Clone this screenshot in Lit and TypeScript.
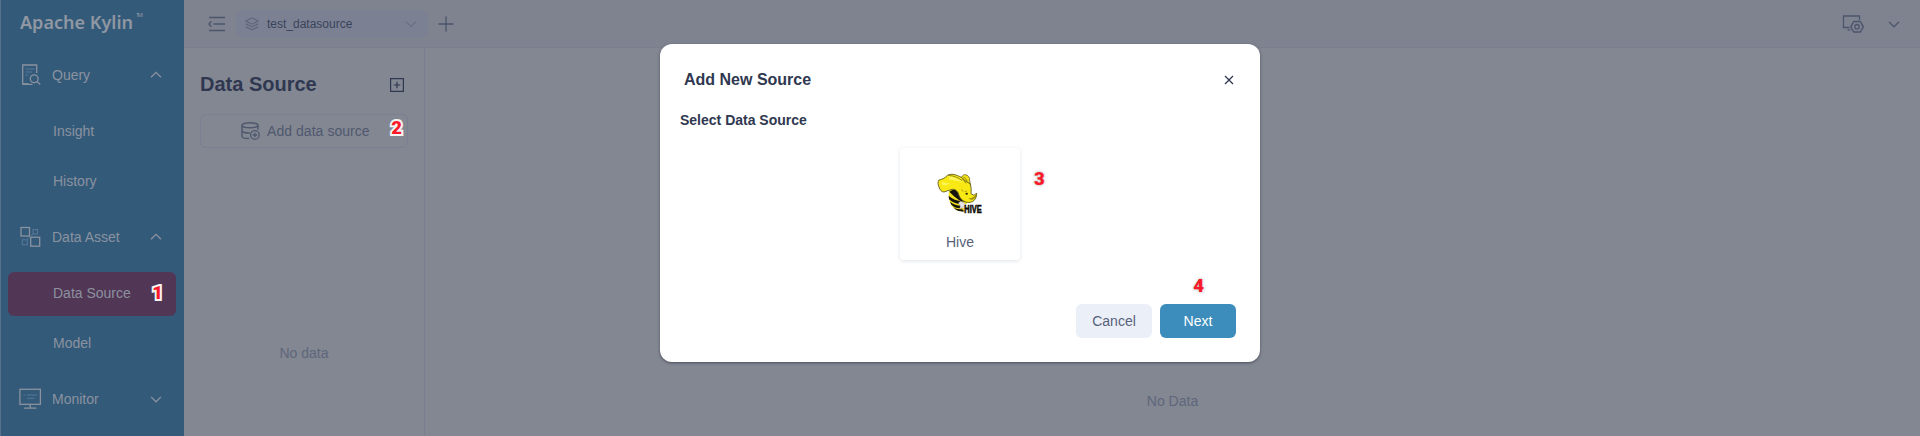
import { LitElement, html, css, svg } from "lit";
import { customElement } from "lit/decorators.js";

const icons = {
  query: svg`<svg class="ico" width="24" height="24" viewBox="0 0 24 24"><path d="M10.500 21H4.700V2H18.700V10" stroke-width="1.300"/><path class="dim" d="M7.500 6h9M7.500 9h6.500M7.500 12h3"/><circle cx="16.200" cy="15.800" r="3.900" stroke-width="1.300"/><path d="M19 18.600l3.300 3M4.700 21.300H14.500" stroke-width="1.300"/></svg>`,
  asset: svg`<svg class="ico" width="24" height="24" viewBox="0 0 24 24"><rect x="3" y="2.500" width="8.500" height="8.500" stroke-width="1.300"/><rect x="12.700" y="12.200" width="9" height="9" stroke-width="1.300"/><rect class="dim" x="15" y="4.500" width="4.500" height="4.500"/><rect class="dim" x="4.300" y="14.800" width="5" height="5"/><path class="dim" d="M12.500 11.500l3-2.700M9 14.600l2.500-2.500"/></svg>`,
  monitor: svg`<svg class="ico" width="24" height="24" viewBox="0 0 24 24"><rect x="1.900" y="2.300" width="20.500" height="15" stroke-width="1.300"/><path d="M12.200 17.300v3.900M6.200 21.200h12.200" stroke-width="1.300"/><path class="dim" d="M5.500 8h1.800M9 8h10M9 11.300h7.500"/></svg>`,
};

const chevron = (up: boolean) =>
  svg`<svg class="ico" width="12" height="12" viewBox="0 0 12 12"><path d=${up ? "M1 8.300L6 3.400l5 4.900" : "M1 3.900L6 8.800l5-4.900"} stroke-width="1.300"/></svg>`;

const hive = svg`<svg width="60" height="60" viewBox="0 0 180 180">
  <path d="M57 78C54 98 59 120 75 132c8 6 17 8 27 6l4-20 28-16-36-36-38 6z" fill="#f4e41b"/>
  <path d="M58 80c12-7 22-8 31-6l10 20 16 10-5 8-20-5C79 99 68 91 58 80zM56 92c11 10 25 15 42 18l4 8C84 119 69 114 57 103zM60 110c10 8 21 12 35 12l3 7c-14 2-25-1-34-10zM70 127c9 6 17 6 27 6l4 5c-12 3-23 0-31-11z" fill="#17150b"/>
  <path d="M93 45c0-10 6-17 13-16 8 1 14 8 13 18l3 13-14 6-16-12z" fill="#f1df16" stroke="#4b481d" stroke-width="2"/>
  <path d="M27 45c7-2 14-4 20-9 6-7 13-9 22-8 10 2 17 5 25 9l12 11 14 8c4 9 4 19 3 30l7 4c4 0 7-2 10-6 0 14-5 22-13 26-9 4-20 3-28-3-9-6-12-15-15-24-5-8-11-11-18-10-9 2-15 6-24 8-7 0-12-6-15-15-4-8-4-15 0-21z" fill="#f8e914" stroke="#55511f" stroke-width="2.500"/>
  <path d="M57 34c17 2 30 10 44 17-15-2-31-7-44-7zM36 50c8 4 16 5 24 5-6 5-16 7-24 4z" fill="#fcf55e"/>
  <path d="M55 31c16 1 29 7 41 15M97 44c5 2 9 6 10 11M100 37c5 1 9 5 11 12" fill="none" stroke="#655f16" stroke-width="2"/>
  <path d="M140 85c0 10-5 17-13 19-5 1-9-1-13-4 10 1 20-3 26-15z" fill="#9b8c10"/>
  <ellipse cx="110" cy="86" rx="4" ry="3" fill="#38320d"/><path d="M104 80l7-2M95 73l4 7" stroke="#8a7e12" stroke-width="2"/>
  <path d="M92 109l10 4 6 8-7 3 3 8-9-4-6 4 2-10-6-8z" fill="#e6e5e8" stroke="#9b99a0" stroke-width="1"/>
  <text x="103" y="145" textLength="52" lengthAdjust="spacingAndGlyphs" font-family="Liberation Sans" font-weight="700" font-size="34" fill="#0d0c04" stroke="#0d0c04" stroke-width="2">HIVE</text>
  <path d="M94 138h10" stroke="#3a370e" stroke-width="3"/>
</svg>`;

@customElement("app-root")
export class AppRoot extends LitElement {
  static styles = css`
    :host { display: block; font-family: "Liberation Sans", Arial, sans-serif; font-size: 14px; line-height: 20px; }
    * { box-sizing: border-box; }
    svg { display: block; flex: none; }
    .ico { fill: none; stroke: currentColor; stroke-width: 1; }
    .dim { stroke: #587899; stroke-width: 1; }
    .page { position: relative; display: flex; width: 1920px; height: 436px; overflow: hidden; background: #838792; }
    .side { width: 184px; background: #345a7a; border-left: 1px solid #57728a; color: #8a929f; }
    .logo { height: 47px; padding: 9px 0 0 19px; }
    .logo text { font-family: "Noto Sans", sans-serif; fill: #8f97a2; }
    .group { display: flex; align-items: center; height: 56px; padding: 0 22px 0 17px; }
    .group span { flex: 1; padding-left: 10px; }
    .sub { display: flex; align-items: center; justify-content: space-between; height: 44px; margin: 6px 8px 0 7px; padding: 0 13px 0 45px; border-radius: 6px; }
    .sub + .group { margin-top: 6px; }
    .active { margin-top: 7px; margin-bottom: -1px; padding-bottom: 2px; background: #523655; }
    .right { flex: 1; display: flex; flex-direction: column; }
    .top { display: flex; align-items: center; height: 48px; border-bottom: 1px solid #7b7f8d; background: #7f838f; padding: 0 20px 0 24px; color: #4b556c; }
    .project { display: flex; align-items: center; width: 192px; height: 28px; margin: 0 10px; padding: 0 11px 0 9px; border-radius: 6px; background: #7b8193; color: #3a435a; font-size: 12px; }
    .project span { flex: 1; padding-left: 8px; }
    .muted { color: #5c657b; }
    .grow { flex: 1; }
    .settings { margin-right: 24px; }
    .body { flex: 1; display: flex; }
    .panel { width: 241px; border-right: 1px solid #7a7e90; padding: 22px 16px 0; }
    .head { display: flex; align-items: center; justify-content: space-between; height: 30px; padding-right: 4px; color: #2f3850; }
    .head h1 { margin: -2px 0 0; font-size: 20px; line-height: 28px; }
    .add { display: flex; align-items: center; height: 34px; margin-top: 14px; padding: 0 5px 0 40px; border: 1px solid #7a7f91; border-radius: 6px; color: #4f586e; }
    .add .label { flex: 1; padding-left: 7px; letter-spacing: .05px; }
    .add .mark { align-self: flex-start; margin-top: 2px; }
    .empty { color: #5e667b; text-align: center; }
    .panel .empty { margin-top: 195px; }
    .main { flex: 1; padding-top: 343px; }
    .mark { font: 900 18.500px/22px Roboto, sans-serif; color: #fa1829; -webkit-text-stroke: 4px #f4f3f4; paint-order: stroke fill; }
    .light { -webkit-text-stroke-color: #f7f7f7; text-shadow: 0 0 2px #aaa; }
    .modal { position: absolute; left: 660px; top: 44px; width: 600px; height: 318px; padding: 23px 24px 24px 20px; border-radius: 12px; background: #fff; color: #2f3850; box-shadow: 0 1px 3px #4a4f5e; display: flex; flex-direction: column; }
    .title { display: flex; align-items: center; justify-content: space-between; height: 26px; padding: 0 2px 0 4px; font-size: 16px; font-weight: 700; }
    .modal h2 { margin: 17px 0 0; font-size: 14px; line-height: 20px; }
    .choices { display: grid; grid-template-columns: 1fr 120px 1fr; margin: 18px -4px 0 0; }
    .card { display: flex; flex-direction: column; align-items: center; height: 112px; padding-top: 17px; border-radius: 4px; box-shadow: 0 1px 4px #dfe1e8; color: #57617a; }
    .card span { margin-top: 7px; }
    .choices .mark { padding: 20px 0 0 14px; }
    .step { display: flex; justify-content: flex-end; margin-top: 15px; padding-right: 32px; }
    .actions { display: flex; justify-content: flex-end; gap: 8px; margin-top: auto; }
    .actions button { width: 76px; height: 34px; border: 0; border-radius: 6px; padding: 0; font: inherit; background: #ebeff8; color: #57617a; }
    .actions .primary { background: #3d8dbc; color: #fff; }
  `;

  render() {
    return html`<div class="page">
      <nav class="side">
        <div class="logo"><svg width="130" height="28"><text x="0" y="20" font-size="18.500" font-weight="600" textLength="113" lengthAdjust="spacingAndGlyphs">Apache Kylin</text><text x="116" y="7.500" font-size="6" textLength="7">TM</text></svg></div>
        <div class="group">${icons.query}<span>Query</span>${chevron(true)}</div>
        <div class="sub">Insight</div>
        <div class="sub">History</div>
        <div class="group">${icons.asset}<span>Data Asset</span>${chevron(true)}</div>
        <div class="sub active">Data Source<b class="mark">1</b></div>
        <div class="sub">Model</div>
        <div class="group">${icons.monitor}<span>Monitor</span>${chevron(false)}</div>
      </nav>
      <div class="right">
        <header class="top">
          <svg class="ico" width="18" height="16" viewBox="0 0 18 16"><path d="M1 1.500H17M5.500 8H17M1 14.500H17M3.500 5.200L.9 8l2.600 2.800" stroke-width="1.400"/></svg>
          <div class="project"><svg class="ico muted" width="14" height="14" viewBox="0 0 14 14"><path d="M7 .8l6.300 3.200L7 7.200.7 4zM.7 6.800L7 10l6.300-3.200M.7 9.700L7 13l6.300-3.300" stroke-width="1.100"/></svg><span>test_datasource</span><svg class="ico muted" width="12" height="12" viewBox="0 0 12 12"><path d="M1 3.500l5 5 5-5"/></svg></div>
          <svg class="ico" width="16" height="16" viewBox="0 0 16 16"><path d="M8 .5v15M.5 8h15" stroke-width="1.300"/></svg>
          <div class="grow"></div>
          <svg class="ico settings" width="22" height="18" viewBox="0 0 22 18"><path d="M17.500 5V1H1.500v11.500h6M5.500 14.800h3" stroke-width="1.300"/><path d="M11.800 6.500h6.500l3 5.300-3 5.200h-6.500l-3-5.200z" stroke-width="1.400"/><circle cx="15" cy="11.700" r="2.200" stroke-width="1.300"/></svg>
          ${chevron(false)}
        </header>
        <div class="body">
          <aside class="panel">
            <div class="head"><h1>Data Source</h1><svg class="ico" width="14" height="14" viewBox="0 0 14 14"><path d="M.6.6h12.800v12.800H.6zM7 3.700v6.600M3.700 7h6.600" stroke-width="1.200"/></svg></div>
            <div class="add"><svg class="ico" width="19" height="18" viewBox="0 0 19 18"><ellipse cx="9" cy="3.300" rx="8" ry="2.500" stroke-width="1.400"/><path d="M1 3.300v11c0 1.200 3 2.200 7 2.200M17 3.300v4.500M1 9c1 1.500 4 2.200 8 2" stroke-width="1.400"/><circle cx="13.900" cy="13" r="4.300" stroke-width="1.300"/><path d="M13.900 10.700v4.600M11.600 13h4.600" stroke-width="1.300"/></svg><span class="label">Add data source</span><b class="mark">2</b></div>
            <div class="empty">No data</div>
          </aside>
          <main class="main empty">No Data</main>
        </div>
      </div>
      <section class="modal">
        <div class="title">Add New Source<svg class="ico" width="10" height="10" viewBox="0 0 10 10"><path d="M1 1l8 8M9 1L1 9" stroke-width="1.300"/></svg></div>
        <h2>Select Data Source</h2>
        <div class="choices"><i></i><div class="card">${hive}<span>Hive</span></div><b class="mark light">3</b></div>
        <div class="step"><b class="mark light">4</b></div>
        <div class="actions"><button>Cancel</button><button class="primary">Next</button></div>
      </section>
    </div>`;
  }
}
